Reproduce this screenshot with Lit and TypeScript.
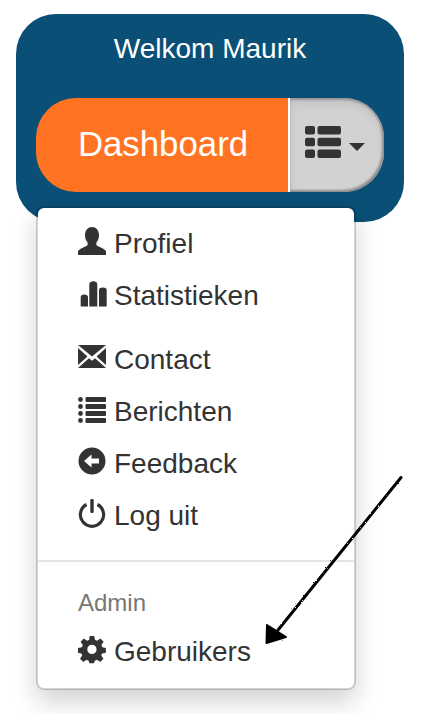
import { LitElement, html, css, svg } from "lit";
import { customElement } from "lit/decorators.js";

const icon = (body: unknown) => html`<svg class="ic" viewBox="0 0 28 28" aria-hidden="true">${body}</svg>`;

const icons = {
  user: svg`<path d="M14 0c4 0 7 3.200 7 8.200 0 3-1 5.300-2.600 7.300v2.700c2 1.600 9.200 3.600 9.600 6.300V28H0v-3.500c.4-2.700 7.600-4.700 9.600-6.300v-2.700C8 13.500 7 11.200 7 8.200 7 3.200 10 0 14 0z"/>`,
  stats: svg`<g transform="translate(0 1.500)"><path d="M2.700 16.500c0-1.500 1.200-2.500 3.600-2.500S10 15 10 16.500V26H2.700z"/><path d="M11.300 4c0-2 1.700-3.200 4-3.200s4 1.200 4 3.200v22h-8z"/><path d="M21 9.500C21 7.800 22.500 7 24.800 7s3.900.8 3.900 2.500V26H21z"/></g>`,
  envelope: svg`<path d="M0 2h28L14 13.500z"/><path d="M0 5v17l9.500-8.500z"/><path d="M28 5v17l-9.500-8.500z"/><path d="M0 25l11-9.800 3 2.600 3-2.600L28 25z"/>`,
  list: svg`<g transform="translate(0 1)"><circle cx="2.500" cy="3.500" r="2.400"/><circle cx="2.500" cy="10.500" r="2.400"/><circle cx="2.500" cy="17.500" r="2.400"/><circle cx="2.500" cy="24.500" r="2.400"/><rect x="7.500" y="1" width="20.500" height="5" rx="1"/><rect x="7.500" y="8" width="20.500" height="5" rx="1"/><rect x="7.500" y="15" width="20.500" height="5" rx="1"/><rect x="7.500" y="22" width="20.500" height="5" rx="1"/></g>`,
  back: svg`<path fill-rule="evenodd" d="M14 .5a13.500 13.500 0 1 1 0 27 13.500 13.500 0 0 1 0-27zM6 14l7.500 6.500V16.500H21v-5h-7.500V7.500z"/>`,
  power: svg`<path d="M8.500 5.500A11.600 11.600 0 1 0 19.500 5.500" fill="none" stroke="#333" stroke-width="3.200"/><rect x="12.300" y="0" width="3.400" height="14" rx="1.200"/>`,
  gear: svg`<path fill-rule="evenodd" d="M11.500 0h5l.8 4.200 2.300 1 3.500-2.400 3.500 3.500-2.400 3.500 1 2.300L29 13v5l-4 .8-1 2.300 2.400 3.500-3.500 3.500-3.500-2.400-2.300 1-.8 2.800h-5l-.8-2.800-2.300-1-3.500 2.400-3.500-3.500 2.400-3.500-1-2.300L-1 18v-5l4.200-.9 1-2.300L1.800 6.300l3.500-3.500 3.500 2.400 2.300-1zM14 9.500a4.500 4.500 0 1 0 0 10 4.500 4.500 0 0 0 0-10z" transform="translate(.9 .9) scale(.93)"/>`,
};

@customElement("app-root")
export class AppRoot extends LitElement {
  static styles = css`
    :host {
      display: block;
      position: relative;
      width: 428px;
      height: 714px;
      overflow: hidden;
      background: #fff;
      font-family: "Liberation Sans", Arial, sans-serif;
      color: #333;
    }
    .panel {
      position: absolute;
      left: 16px;
      top: 14px;
      width: 388px;
      height: 208px;
      box-sizing: border-box;
      padding: 19px 20px 0;
      background: #0a4f75;
      border-radius: 40px;
    }
    .title {
      margin: 0;
      height: 32px;
      line-height: 32px;
      font-size: 28px;
      font-weight: 400;
      text-align: center;
      color: #fff;
    }
    .group {
      display: flex;
      height: 94px;
      margin-top: 33px;
    }
    .dash {
      width: 252px;
      display: flex;
      align-items: center;
      justify-content: center;
      padding: 0 0 3px 2px;
      box-sizing: border-box;
      background: #ff7322;
      color: #fff;
      font-size: 34.8px;
      border-radius: 40px 0 0 40px;
    }
    .toggle {
      width: 96px;
      box-sizing: border-box;
      display: flex;
      align-items: center;
      gap: 8px;
      padding-left: 15px;
      background: #d2d2d2;
      border-left: 2px solid #fff;
      border-radius: 0 40px 40px 0;
      box-shadow: inset 0 2px 2px #979797, inset -2px -2px 2px #8f8f8f, inset 0 6px 10px rgba(0, 0, 0, 0.08);
    }
    .toggle .bars {
      width: 36px;
      height: 32px;
      margin-top: -6px;
      fill: #333;
    }
    .caret {
      width: 0;
      height: 0;
      margin-top: 4px;
      border-left: 8px solid transparent;
      border-right: 8px solid transparent;
      border-top: 8px solid #333;
    }
    .menu {
      position: absolute;
      left: 36px;
      top: 206px;
      width: 320px;
      height: 484px;
      box-sizing: border-box;
      padding: 10px 0 0;
      background: #fff;
      border: 2px solid rgba(0, 0, 0, 0.17);
      background-clip: padding-box;
      border-radius: 8px;
      box-shadow: 0 12px 24px rgba(0, 0, 0, 0.175);
    }
    .sec {
      display: flex;
      flex-direction: column;
    }
    .sec + .sec {
      margin-top: 12px;
    }
    .item {
      display: flex;
      align-items: center;
      gap: 8px;
      height: 52px;
      padding-left: 40px;
      font-size: 28px;
      line-height: 52px;
      white-space: nowrap;
    }
    .ic {
      width: 28px;
      height: 28px;
      flex: none;
      fill: #333;
      overflow: visible;
      position: relative;
      top: -3px;
    }
    hr {
      margin: 18px 0 0;
      border: 0;
      height: 2px;
      background: #e5e5e5;
    }
    .head {
      margin-top: 24px;
      padding-left: 40px;
      height: 34px;
      line-height: 34px;
      font-size: 24px;
      color: #777;
    }
    .head + .item {
      margin-top: 6px;
    }
    .arrow {
      position: absolute;
      left: 260px;
      top: 470px;
      width: 150px;
      height: 180px;
    }
  `;

  private item(ic: unknown, label: string) {
    return html`<div class="item">${icon(ic)}<span>${label}</span></div>`;
  }

  render() {
    return html`
      <section class="panel">
        <h1 class="title">Welkom Maurik</h1>
        <div class="group">
          <div class="dash">Dashboard</div>
          <div class="toggle">
            <svg class="bars" viewBox="0 0 36 32" aria-hidden="true">
              <rect x="0" y="0" width="10" height="8.500" rx="2" />
              <rect x="12.500" y="0" width="23.500" height="8.500" rx="2" />
              <rect x="0" y="11.700" width="10" height="8.500" rx="2" />
              <rect x="12.500" y="11.700" width="23.500" height="8.500" rx="2" />
              <rect x="0" y="23.400" width="10" height="8.500" rx="2" />
              <rect x="12.500" y="23.400" width="23.500" height="8.500" rx="2" />
            </svg>
            <span class="caret"></span>
          </div>
        </div>
      </section>
      <nav class="menu">
        <div class="sec">
          ${this.item(icons.user, "Profiel")}
          ${this.item(icons.stats, "Statistieken")}
        </div>
        <div class="sec">
          ${this.item(icons.envelope, "Contact")}
          ${this.item(icons.list, "Berichten")}
          ${this.item(icons.back, "Feedback")}
          ${this.item(icons.power, "Log uit")}
        </div>
        <hr />
        <div class="head">Admin</div>
        ${this.item(icons.gear, "Gebruikers")}
      </nav>
      <svg class="arrow" viewBox="0 0 150 180" aria-hidden="true">
        <defs>
          <filter id="rough" x="-10%" y="-10%" width="120%" height="120%">
            <feTurbulence type="fractalNoise" baseFrequency="0.6" numOctaves="2" seed="3" />
            <feDisplacementMap in="SourceGraphic" scale="2" />
          </filter>
        </defs>
        <g filter="url(#rough)">
          <path d="M141 7.500 L14 165" fill="none" stroke="#000" stroke-width="3" stroke-linecap="round" />
          <path d="M7 155 L26 167 L6.500 173 Z" fill="#000" stroke="#000" stroke-width="2" stroke-linejoin="round" />
        </g>
      </svg>
    `;
  }
}
